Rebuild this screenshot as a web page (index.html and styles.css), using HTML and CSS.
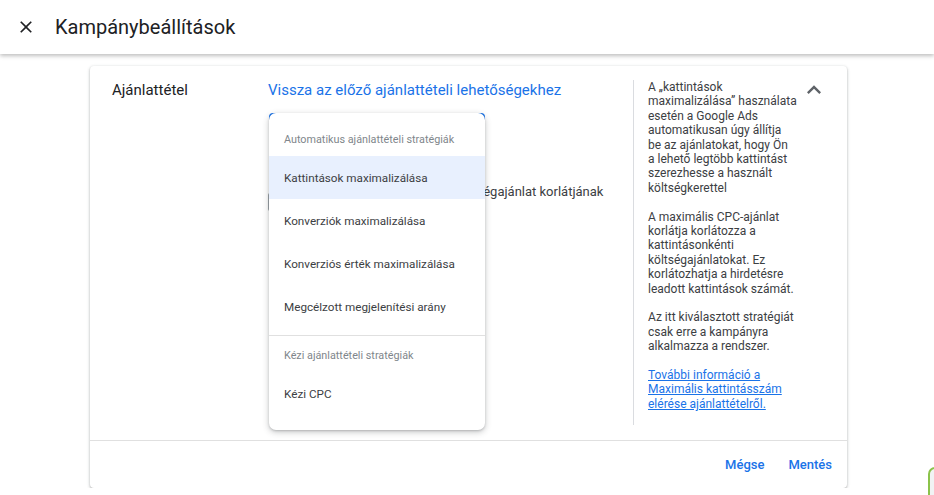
FILE: index.html
```html
<!doctype html>
<html lang="hu">
<head>
    <meta charset="UTF-8">
    <meta name="viewport" content="width=device-width, initial-scale=1.0">
    <title>Kampánybeállítások</title>
    <link rel="stylesheet" href="styles.css">
</head>
<body>
<header class="topbar">
    <button class="icon-btn close-btn" aria-label="Bezárás">
        <svg viewBox="0 0 24 24" width="20" height="20"><path d="M19 6.41L17.59 5 12 10.59 6.41 5 5 6.41 10.59 12 5 17.59 6.41 19 12 13.41 17.59 19 19 17.59 13.41 12z"/></svg>
    </button>
    <h1 class="title">Kampánybeállítások</h1>
</header>

<main class="page">
    <section class="card">
        <div class="card-body">
            <div class="section-label">Ajánlattétel</div>

            <div class="section-main">
                <a class="back-link" href="#">Vissza az előző ajánlattételi lehetőségekhez</a>

                <div class="select-wrap">
                    <div class="select-field"></div>

                    <!-- Open dropdown -->
                    <div class="menu">
                        <div class="menu-group">Automatikus ajánlattételi stratégiák</div>
                        <div class="menu-item selected">Kattintások maximalizálása</div>
                        <div class="menu-item">Konverziók maximalizálása</div>
                        <div class="menu-item">Konverziós érték maximalizálása</div>
                        <div class="menu-item">Megcélzott megjelenítési arány</div>
                        <div class="menu-divider"></div>
                        <div class="menu-group second">Kézi ajánlattételi stratégiák</div>
                        <div class="menu-item">Kézi CPC</div>
                    </div>
                </div>

                <label class="check-row">
                    <span class="checkbox"></span>
                    <span>Maximális kattintásonkénti költségajánlat korlátjának beállítása</span>
                </label>
            </div>

            <aside class="help">
                <p>A „kattintások<br>maximalizálása” használata<br>esetén a Google Ads<br>automatikusan úgy állítja<br>be az ajánlatokat, hogy Ön<br>a lehető legtöbb kattintást<br>szerezhesse a használt<br>költségkerettel</p>
                <p>A maximális CPC-ajánlat<br>korlátja korlátozza a<br>kattintásonkénti<br>költségajánlatokat. Ez<br>korlátozhatja a hirdetésre<br>leadott kattintások számát.</p>
                <p>Az itt kiválasztott stratégiát<br>csak erre a kampányra<br>alkalmazza a rendszer.</p>
                <p><a href="#">További információ a<br>Maximális kattintásszám<br>elérése ajánlattételről.</a></p>
            </aside>

            <button class="icon-btn collapse-btn" aria-label="Összecsukás">
                <svg viewBox="0 0 24 24" width="28" height="28"><path d="M12 8l-6 6 1.41 1.41L12 10.83l4.59 4.58L18 14z"/></svg>
            </button>
        </div>

        <div class="card-footer">
            <button class="text-btn">Mégse</button>
            <button class="text-btn">Mentés</button>
        </div>
    </section>
</main>

<div class="side-peek"></div>
</body>
</html>
```

FILE: styles.css
```css
/* Global */
body {
    margin: 0;
    font-family: Roboto, "Noto Sans", sans-serif;
    color: #202124;
    background: #fff;
    overflow: hidden;
}

button {
    font-family: inherit;
    background: none;
    border: none;
    padding: 0;
    cursor: pointer;
}

/* Top bar */
.topbar {
    height: 54px;
    display: flex;
    align-items: center;
    padding-left: 16px;
    background: #fff;
    box-shadow: 0 2px 4px rgba(0, 0, 0, 0.25);
    position: relative;
    z-index: 2;
}

.icon-btn {
    display: flex;
    align-items: center;
    justify-content: center;
}

.icon-btn svg {
    fill: currentColor;
}

.close-btn {
    color: #202124;
    margin-right: 19px;
}

.title {
    margin: 0;
    font-size: 20px;
    font-weight: 400;
    color: #202124;
}

/* Card */
.page {
    padding-top: 12px;
}

.card {
    margin-left: 90px;
    width: 757px;
    background: #fff;
    border-radius: 4px;
    box-shadow: 0 1px 2px rgba(60, 64, 67, 0.3), 0 1px 3px 1px rgba(60, 64, 67, 0.12);
}

.card-body {
    display: flex;
    align-items: flex-start;
    padding: 14px 19px 15px 22px;
}

.section-label {
    flex: none;
    width: 156px;
    font-size: 15px;
    line-height: 20px;
    color: #202124;
}

.section-main {
    flex: none;
    width: 350px;
    margin-right: 15px;
}

.back-link {
    display: block;
    font-size: 15px;
    line-height: 20px;
    color: #1a73e8;
    text-decoration: none;
}

.select-wrap {
    position: relative;
    margin: 13px 0 0 1px;
    width: 216px;
}

.select-field {
    height: 40px;
    box-sizing: border-box;
    border: 2px solid #1a73e8;
    border-radius: 4px;
}

/* Dropdown menu */
.menu {
    position: absolute;
    top: 0;
    left: 0;
    width: 216px;
    padding: 10px 0 15px;
    background: #fff;
    border-radius: 7px;
    box-shadow: 0 2px 6px rgba(60, 64, 67, 0.3), 0 1px 2px rgba(60, 64, 67, 0.2);
    z-index: 3;
}

.menu-group {
    height: 33px;
    display: flex;
    align-items: center;
    padding-left: 15px;
    font-size: 10.8px;
    color: #80868b;
}

.menu-group.second {
    margin-top: 3px;
}

.menu-item {
    height: 43px;
    display: flex;
    align-items: center;
    padding-left: 15px;
    font-size: 11.7px;
    color: #3c4043;
}

.menu-item.selected {
    background: #e8f0fe;
}

.menu-divider {
    height: 1px;
    margin-top: 7px;
    background: #e0e0e0;
}

.check-row {
    display: flex;
    align-items: center;
    gap: 10px;
    margin-top: 29px;
    font-size: 13px;
    line-height: 20px;
    color: #3c4043;
}

.checkbox {
    flex: none;
    width: 14px;
    height: 14px;
    border: 2px solid #9aa0a6;
    border-radius: 2px;
}

/* Help column */
.help {
    flex: none;
    width: 148px;
    padding: 0 0 14px 14px;
    border-left: 1px solid #dadce0;
    font-size: 12px;
    line-height: 14.4px;
    color: #3c4043;
    white-space: nowrap;
}

.help p {
    margin: 0 0 14.4px;
}

.help p:last-child {
    margin-bottom: 0;
}

.help a {
    color: #1a73e8;
}

.collapse-btn {
    margin: -4px 0 0 4px;
    color: #5f6368;
}

/* Footer */
.card-footer {
    height: 47px;
    border-top: 1px solid #e0e0e0;
    display: flex;
    align-items: center;
    justify-content: flex-end;
    gap: 24px;
    padding-right: 15px;
}

.text-btn {
    font-size: 13px;
    font-weight: 500;
    color: #1a73e8;
}

/* Edge of a neighbouring panel peeking in */
.side-peek {
    position: fixed;
    left: 928px;
    top: 467px;
    width: 40px;
    height: 60px;
    border: 2px solid #8bc34a;
    border-radius: 7px;
    background: #f1f3f4;
}
```
